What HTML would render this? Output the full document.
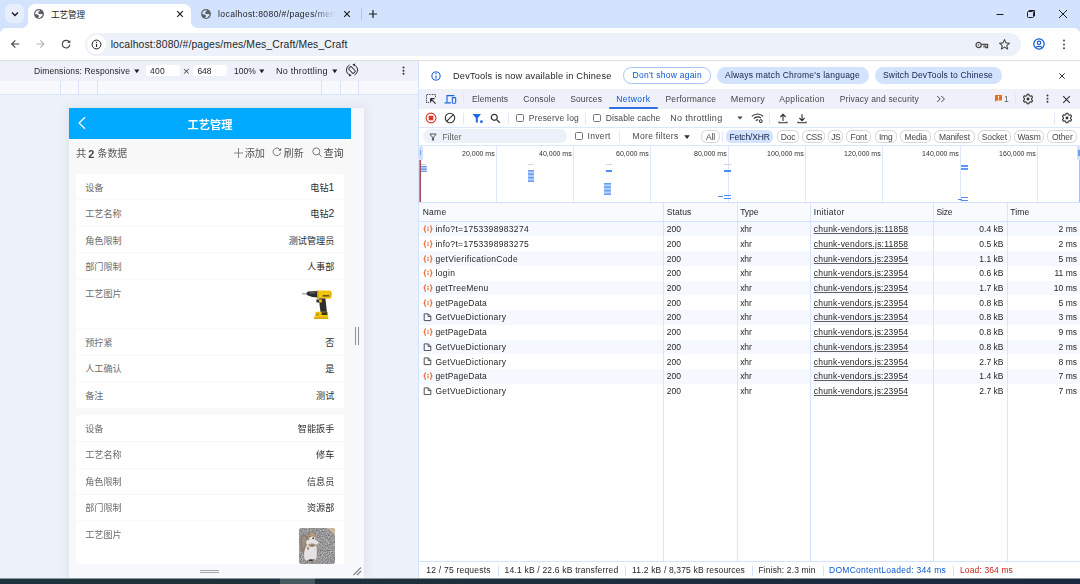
<!DOCTYPE html>
<html lang="zh-CN"><head><meta charset="utf-8"><title>工艺管理</title>
<style>
html,body{margin:0;padding:0}
body{width:1080px;height:584px;overflow:hidden;position:relative;background:#fff;font-family:"Liberation Sans", "Noto Sans CJK SC", sans-serif;}
#root{position:absolute;left:0;top:0;width:1080px;height:584px;overflow:hidden;opacity:0.999}
#root div,#root span,#root svg{position:absolute;display:block}
#root span{white-space:nowrap;line-height:14px;height:14px}
#root span b{position:static;display:inline;font-weight:700}
#root span i{position:static;display:inline;font-style:normal}
</style></head>
<body><div id="root">
<div style="left:0px;top:0px;width:1080px;height:28px;background:#d3e3fd;"></div>
<div style="left:5px;top:4px;width:19px;height:19px;background:#e6eefc;border-radius:6px;"></div>
<svg style="left:10px;top:9px;" width="10" height="10" viewBox="0 0 10 10"><path d="M2 3.5 L5 6.5 L8 3.5" fill="none" stroke="#1f1f1f" stroke-width="1.5"/></svg>
<div style="left:28px;top:4px;width:163px;height:26px;background:#ffffff;border-radius:7px 7px 0 0;"></div>
<svg style="left:22px;top:22px;" width="6" height="6" viewBox="0 0 6 6"><path d="M6 0 A6 6 0 0 1 0 6 L6 6 Z" fill="#fff"/></svg>
<svg style="left:191px;top:22px;" width="6" height="6" viewBox="0 0 6 6"><path d="M0 0 A6 6 0 0 0 6 6 L0 6 Z" fill="#fff"/></svg>
<svg style="left:33.4px;top:7.9px;" width="12" height="12" viewBox="0 0 12 12"><circle cx="6" cy="6" r="4.95" fill="#5a5e63"/><path d="M2.2 5.2 C2.6 4 3.4 3.1 4.4 2.6 L6.9 1.9 C6.6 2.8 6.3 3.4 5.7 3.9 C5.3 4.3 4.9 4.5 5 4.9 C5.4 5.6 6.2 5.9 7 6 L9.7 6.2 C9.7 7 9.4 7.6 8.9 8.1 C8.4 8.7 8 9.1 7.4 9.5 C6.6 10 5.8 10.2 4.8 10.1 C5.2 9.6 5.8 9 5.9 8.4 C6 7.9 5.9 7.5 5.6 7.2 C4.8 6.6 3.4 6.4 2.4 6.2 Z" fill="#fff"/></svg>
<span style="top:7.60px;font-size:8.6px;color:#1f1f1f;left:51.00px;letter-spacing:-0.098px;">工艺管理</span>
<svg style="left:176px;top:10px;" width="8" height="8" viewBox="0 0 8 8"><path d="M1.2 1.2 L6.8 6.8 M6.8 1.2 L1.2 6.8" stroke="#1f1f1f" stroke-width="1.2" fill="none"/></svg>
<svg style="left:200.3px;top:7.9px;" width="12" height="12" viewBox="0 0 12 12"><circle cx="6" cy="6" r="4.95" fill="#5a5e63"/><path d="M2.2 5.2 C2.6 4 3.4 3.1 4.4 2.6 L6.9 1.9 C6.6 2.8 6.3 3.4 5.7 3.9 C5.3 4.3 4.9 4.5 5 4.9 C5.4 5.6 6.2 5.9 7 6 L9.7 6.2 C9.7 7 9.4 7.6 8.9 8.1 C8.4 8.7 8 9.1 7.4 9.5 C6.6 10 5.8 10.2 4.8 10.1 C5.2 9.6 5.8 9 5.9 8.4 C6 7.9 5.9 7.5 5.6 7.2 C4.8 6.6 3.4 6.4 2.4 6.2 Z" fill="#d3e3fd"/></svg>
<span style="top:7.30px;font-size:8.6px;color:#1f1f1f;left:218.00px;letter-spacing:0.385px;-webkit-mask-image:linear-gradient(90deg,#000 80%,transparent 100%);mask-image:linear-gradient(90deg,#000 80%,transparent 100%);">localhost:8080/#/pages/men</span>
<svg style="left:343px;top:10px;" width="8" height="8" viewBox="0 0 8 8"><path d="M1.2 1.2 L6.8 6.8 M6.8 1.2 L1.2 6.8" stroke="#1f1f1f" stroke-width="1.2" fill="none"/></svg>
<div style="left:360.5px;top:8px;width:1px;height:12px;background:#a8c7fa;"></div>
<svg style="left:368px;top:9px;" width="10" height="10" viewBox="0 0 10 10"><path d="M5 1 V9 M1 5 H9" stroke="#1f1f1f" stroke-width="1.2" fill="none"/></svg>
<svg style="left:995px;top:9px;" width="10" height="10" viewBox="0 0 10 10"><path d="M1.5 5.5 H8.5" stroke="#1f1f1f" stroke-width="1" fill="none"/></svg>
<svg style="left:1026px;top:9px;" width="10" height="10" viewBox="0 0 10 10"><rect x="1.5" y="2.5" width="6" height="6" rx="1" fill="none" stroke="#1f1f1f" stroke-width="1"/><path d="M3 2.5 V1.5 H8.5 V7 H7.5" fill="none" stroke="#1f1f1f" stroke-width="1"/></svg>
<svg style="left:1058px;top:9px;" width="10" height="10" viewBox="0 0 10 10"><path d="M1 1 L9 9 M9 1 L1 9" stroke="#1f1f1f" stroke-width="1" fill="none"/></svg>
<div style="left:0px;top:28px;width:1080px;height:32.5px;background:#ffffff;"></div>
<svg style="left:0px;top:28px;" width="6" height="6" viewBox="0 0 6 6"><path d="M0 0 H6 A6 6 0 0 0 0 6 Z" fill="#d3e3fd"/></svg>
<svg style="left:1074px;top:28px;" width="6" height="6" viewBox="0 0 6 6"><path d="M6 0 H0 A6 6 0 0 1 6 6 Z" fill="#d3e3fd"/></svg>
<div style="left:0px;top:60px;width:1080px;height:1px;background:#dcdfe4;"></div>
<svg style="left:9px;top:38px;" width="12" height="12" viewBox="0 0 12 12"><path d="M10.2 6 H2.8 M6.3 2.4 L2.7 6 L6.3 9.6" fill="none" stroke="#474747" stroke-width="1.15"/></svg>
<svg style="left:34px;top:38px;" width="12" height="12" viewBox="0 0 12 12"><path d="M2.4 6 H9.8 M6.3 2.4 L9.9 6 L6.3 9.6" fill="none" stroke="#b4b7bb" stroke-width="1.15"/></svg>
<svg style="left:60px;top:38px;" width="12" height="12" viewBox="0 0 12 12"><path d="M9.5 4.4 A3.8 3.8 0 1 0 9.9 6.6" fill="none" stroke="#474747" stroke-width="1.15"/><path d="M10.3 2 V4.9 H7.4 Z" fill="#474747"/></svg>
<div style="left:85px;top:33px;width:936px;height:23px;background:#edf2fa;border-radius:11.5px;"></div>
<div style="left:87px;top:35px;width:19px;height:19px;background:#ffffff;border-radius:9.5px;"></div>
<svg style="left:91px;top:39px;" width="11" height="11" viewBox="0 0 11 11"><circle cx="5.5" cy="5.5" r="4.4" fill="none" stroke="#1f1f1f" stroke-width="1"/><path d="M5.5 5 V8" stroke="#1f1f1f" stroke-width="1.1"/><circle cx="5.5" cy="3.4" r="0.65" fill="#1f1f1f"/></svg>
<span style="top:38.40px;font-size:10.4px;color:#1f1f1f;left:110.70px;letter-spacing:0.126px;">localhost:8080/#/pages/mes/Mes_Craft/Mes_Craft</span>
<svg style="left:975px;top:40px;" width="14" height="10" viewBox="0 0 14 10"><circle cx="3.6" cy="5" r="2.6" fill="none" stroke="#474747" stroke-width="1.2"/><circle cx="3.4" cy="5" r="0.7" fill="#474747"/><path d="M6.2 4.4 H12.6 V7.6 H10.8 V6 H9 V7.6" fill="none" stroke="#474747" stroke-width="1.2"/></svg>
<svg style="left:998px;top:38px;" width="13" height="13" viewBox="0 0 13 13"><path d="M6.5 1.6 L7.95 4.9 L11.5 5.2 L8.8 7.55 L9.6 11 L6.5 9.15 L3.4 11 L4.2 7.55 L1.5 5.2 L5.05 4.9 Z" fill="none" stroke="#474747" stroke-width="1.1" stroke-linejoin="round"/></svg>
<svg style="left:1033px;top:38px;" width="12" height="12" viewBox="0 0 12 12"><circle cx="6" cy="6" r="5.2" fill="none" stroke="#0b57d0" stroke-width="1.2"/><circle cx="6" cy="4.8" r="1.7" fill="none" stroke="#0b57d0" stroke-width="1.1"/><path d="M2.6 9.6 C3.6 7.9 8.4 7.9 9.4 9.6" fill="none" stroke="#0b57d0" stroke-width="1.1"/></svg>
<svg style="left:1062.3px;top:38.6px;" width="4" height="11" viewBox="0 0 4 11"><circle cx="2" cy="1.6" r="1" fill="#474747"/><circle cx="2" cy="5.4" r="1" fill="#474747"/><circle cx="2" cy="9.2" r="1" fill="#474747"/></svg>
<div style="left:0px;top:61px;width:419px;height:19.5px;background:#eef1f9;"></div>
<span style="top:63.60px;font-size:8.5px;color:#1f1f1f;left:34.00px;letter-spacing:0.112px;">Dimensions: Responsive</span>
<svg style="left:133.8px;top:69.3px;" width="6" height="5" viewBox="0 0 6 5"><path d="M0.3 0.6 H5.3 L2.8 4.2 Z" fill="#1f1f1f"/></svg>
<div style="left:146px;top:65.2px;width:34px;height:10.7px;background:#ffffff;border-radius:3px;"></div>
<span style="top:63.60px;font-size:8.5px;color:#1f1f1f;left:150.00px;letter-spacing:0.271px;">400</span>
<span style="top:63.90px;font-size:11.5px;color:#474747;left:183.00px;">×</span>
<div style="left:192.6px;top:65.2px;width:34.2px;height:10.7px;background:#ffffff;border-radius:3px;"></div>
<span style="top:63.60px;font-size:8.5px;color:#1f1f1f;left:197.40px;letter-spacing:-0.062px;">648</span>
<span style="top:63.60px;font-size:8.5px;color:#1f1f1f;left:234.00px;letter-spacing:-0.013px;">100%</span>
<svg style="left:259.2px;top:69.3px;" width="6" height="5" viewBox="0 0 6 5"><path d="M0.3 0.6 H5.3 L2.8 4.2 Z" fill="#1f1f1f"/></svg>
<span style="top:63.60px;font-size:9.01px;color:#1f1f1f;left:276.00px;letter-spacing:0.239px;">No throttling</span>
<svg style="left:332px;top:69.3px;" width="6" height="5" viewBox="0 0 6 5"><path d="M0.3 0.6 H5.3 L2.8 4.2 Z" fill="#1f1f1f"/></svg>
<svg style="left:345px;top:63.4px;" width="14" height="14" viewBox="0 0 14 14"><g transform="rotate(-45 7 7)" fill="none" stroke="#303030" stroke-width="1"><rect x="5.2" y="3.6" width="3.6" height="6.8" rx="0.9"/></g><path d="M4.63 1.92 A5.6 5.6 0 0 0 4.63 12.08 M9.37 12.08 A5.6 5.6 0 0 0 9.37 1.92" fill="none" stroke="#303030" stroke-width="1"/><path d="M4.2 10.5 L6.7 12.5 L3.9 13.5 Z M9.8 3.5 L7.3 1.5 L10.1 0.5 Z" fill="#303030"/></svg>
<svg style="left:401.5px;top:66px;" width="3" height="10" viewBox="0 0 3 10"><circle cx="1.5" cy="1.5" r="1" fill="#303030"/><circle cx="1.5" cy="4.65" r="1" fill="#303030"/><circle cx="1.5" cy="7.8" r="1" fill="#303030"/></svg>
<div style="left:0px;top:80.5px;width:419px;height:13.5px;background:#f8f9fd;"></div>
<div style="left:59.8px;top:80.5px;width:1px;height:13.5px;background:#d9e4fa;"></div>
<div style="left:77.8px;top:80.5px;width:1px;height:13.5px;background:#d9e4fa;"></div>
<div style="left:96.8px;top:80.5px;width:1px;height:13.5px;background:#d9e4fa;"></div>
<div style="left:321px;top:80.5px;width:1px;height:13.5px;background:#d9e4fa;"></div>
<div style="left:339.7px;top:80.5px;width:1px;height:13.5px;background:#d9e4fa;"></div>
<div style="left:358px;top:80.5px;width:1px;height:13.5px;background:#d9e4fa;"></div>
<div style="left:0px;top:94px;width:419px;height:1px;background:#dbe5fa;"></div>
<div style="left:0px;top:95px;width:419px;height:483px;background:#edf1f9;"></div>
<div style="left:69px;top:108px;width:295px;height:469.5px;background:#f7f8fc;box-shadow:0 0 9px 1px rgba(60,64,80,0.10);"></div>
<div style="left:355px;top:327px;width:1px;height:18px;background:#8f9194;"></div>
<div style="left:358px;top:327px;width:1px;height:18px;background:#8f9194;"></div>
<div style="left:200px;top:569.6px;width:19px;height:1px;background:#a4a6a9;"></div>
<div style="left:200px;top:572px;width:19px;height:1px;background:#a4a6a9;"></div>
<svg style="left:352px;top:566px;" width="10" height="10" viewBox="0 0 10 10"><path d="M1.5 9 L9 1.5 M5 9 L9 5" stroke="#7e8084" stroke-width="1.1" fill="none"/></svg>
<div style="left:69px;top:108px;width:281.5px;height:455.6px;background:#f8f8f8;overflow:hidden" id="vp">
<div style="left:0px;top:0px;width:282px;height:30.8px;background:#00aaff;"></div>
<svg style="left:8px;top:7.5px;" width="10" height="14" viewBox="0 0 10 14"><path d="M8 1.2 L2 7 L8 12.8" fill="none" stroke="#ffffff" stroke-width="1.2"/></svg>
<span style="top:10.00px;font-size:11.2px;color:#ffffff;font-weight:700;left:118.60px;letter-spacing:0.009px;">工艺管理</span>
<span style="top:38.80px;font-size:10.2px;color:#5a5a5a;left:7.10px;">共</span>
<span style="top:38.60px;font-size:10.79px;color:#444444;font-weight:700;left:19.30px;letter-spacing:-0.001px;">2</span>
<span style="top:38.80px;font-size:9.88px;color:#5a5a5a;left:28.60px;letter-spacing:0.000px;">条数据</span>
<svg style="left:165.4px;top:39.5px;" width="9" height="10" viewBox="0 0 9 10"><path d="M4.5 0 V10 M0 5 H9" stroke="#6a6a6a" stroke-width="0.8" fill="none"/></svg>
<span style="top:38.50px;font-size:10.2px;color:#555555;left:175.70px;letter-spacing:-0.037px;">添加</span>
<svg style="left:203.39999999999998px;top:39.400000000000006px;" width="10" height="10" viewBox="0 0 10 10"><path d="M8.3 3.2 A3.8 3.8 0 1 0 8.6 5.6" fill="none" stroke="#666" stroke-width="0.85"/><path d="M9.1 0.9 V3.7 H6.3 Z" fill="#666"/></svg>
<span style="top:38.50px;font-size:9.86px;color:#555555;left:214.80px;letter-spacing:0.000px;">刷新</span>
<svg style="left:242.8px;top:39.30000000000001px;" width="10.5" height="10.5" viewBox="0 0 10.5 10.5"><circle cx="4.3" cy="4.4" r="3.5" fill="none" stroke="#666" stroke-width="0.85"/><path d="M6.9 7 L9.6 9.8" stroke="#666" stroke-width="0.9"/></svg>
<span style="top:38.50px;font-size:9.86px;color:#444444;left:254.80px;letter-spacing:0.000px;">查询</span>
<div style="left:7px;top:66px;width:268px;height:234px;background:#ffffff;border-radius:3px;"></div>
<span style="top:72.90px;font-size:9.15px;color:#6c6c6c;left:16.20px;">设备</span>
<span style="top:72.90px;font-size:9.15px;color:#2c2c2c;right:16.20px;">电钻<i style="font-size:10.3px">1</i></span>
<span style="top:99.30px;font-size:9.15px;color:#6c6c6c;left:16.20px;">工艺名称</span>
<span style="top:99.30px;font-size:9.15px;color:#2c2c2c;right:16.20px;">电钻<i style="font-size:10.3px">2</i></span>
<span style="top:125.80px;font-size:9.15px;color:#6c6c6c;left:16.20px;">角色限制</span>
<span style="top:125.80px;font-size:9.15px;color:#2c2c2c;right:16.20px;">测试管理员</span>
<span style="top:152.30px;font-size:9.15px;color:#6c6c6c;left:16.20px;">部门限制</span>
<span style="top:152.30px;font-size:9.15px;color:#2c2c2c;right:16.20px;">人事部</span>
<span style="top:178.60px;font-size:9.15px;color:#6c6c6c;left:16.20px;">工艺图片</span>
<span style="top:228.10px;font-size:9.15px;color:#6c6c6c;left:16.20px;">预拧紧</span>
<span style="top:228.10px;font-size:9.15px;color:#2c2c2c;right:16.20px;">否</span>
<span style="top:254.40px;font-size:9.15px;color:#6c6c6c;left:16.20px;">人工确认</span>
<span style="top:254.40px;font-size:9.15px;color:#2c2c2c;right:16.20px;">是</span>
<span style="top:280.80px;font-size:9.15px;color:#6c6c6c;left:16.20px;">备注</span>
<span style="top:280.80px;font-size:9.15px;color:#2c2c2c;right:16.20px;">测试</span>
<div style="left:7px;top:91.4px;width:268px;height:1px;background:#f8f8f8;"></div>
<div style="left:7px;top:117.9px;width:268px;height:1px;background:#f8f8f8;"></div>
<div style="left:7px;top:144.4px;width:268px;height:1px;background:#f8f8f8;"></div>
<div style="left:7px;top:170.8px;width:268px;height:1px;background:#f8f8f8;"></div>
<div style="left:7px;top:220.39999999999998px;width:268px;height:1px;background:#f8f8f8;"></div>
<div style="left:7px;top:246.8px;width:268px;height:1px;background:#f8f8f8;"></div>
<div style="left:7px;top:273.2px;width:268px;height:1px;background:#f8f8f8;"></div>
<svg style="left:233px;top:181.5px;" width="30" height="29" viewBox="0 0 30 29"><defs><filter id="dbl" x="-10%" y="-10%" width="120%" height="120%"><feGaussianBlur stdDeviation="0.28"/></filter></defs><g filter="url(#dbl)"><rect x="0" y="3.4" width="5.4" height="0.9" fill="#7d7d7d"/><path d="M4.6 3 L6 1.5 L15.4 0.9 L15.6 7.4 L10.4 7 L6 5.6 L4.6 4.6 Z" fill="#2c2c2a"/><path d="M7 2.4 L13.6 1.8 L13.8 3.4 L7.4 4 Z" fill="#55554f"/><rect x="15.1" y="0.5" width="14.4" height="8.3" rx="1.8" fill="#f1c40f"/><rect x="15.1" y="0.5" width="1.3" height="8.3" fill="#c99a06"/><rect x="20.6" y="5.2" width="6.6" height="1.3" fill="#4a4024"/><rect x="27.6" y="2" width="1.6" height="5" rx="0.6" fill="#dcae08"/><path d="M16.8 8.6 H23.4 L25 22.6 H18.6 Z" fill="#2d2d2d"/><path d="M14.2 9.4 H17 L17.4 12.6 H14.6 Z" fill="#33332f"/><path d="M16.9 9.4 H19.8 L19.8 12.6 H17.4 Z" fill="#f1c40f"/><path d="M13.8 21.8 H26 L26.2 29 H12 Z" fill="#f1c40f"/><path d="M12 27.6 H26.2 V29 H12 Z" fill="#d9a806"/><rect x="19.6" y="22.2" width="5.6" height="2.8" fill="#3c3624"/><rect x="14.2" y="23.2" width="2.6" height="2.6" rx="0.6" fill="#c99a06"/></g></svg>
<div style="left:7px;top:307px;width:268px;height:170px;background:#ffffff;border-radius:3px;"></div>
<span style="top:313.70px;font-size:9.15px;color:#6c6c6c;left:16.20px;">设备</span>
<span style="top:313.70px;font-size:9.15px;color:#2c2c2c;right:16.20px;">智能扳手</span>
<span style="top:340.30px;font-size:9.15px;color:#6c6c6c;left:16.20px;">工艺名称</span>
<span style="top:340.30px;font-size:9.15px;color:#2c2c2c;right:16.20px;">修车</span>
<span style="top:366.70px;font-size:9.15px;color:#6c6c6c;left:16.20px;">角色限制</span>
<span style="top:366.70px;font-size:9.15px;color:#2c2c2c;right:16.20px;">信息员</span>
<span style="top:393.10px;font-size:9.15px;color:#6c6c6c;left:16.20px;">部门限制</span>
<span style="top:393.10px;font-size:9.15px;color:#2c2c2c;right:16.20px;">资源部</span>
<span style="top:419.60px;font-size:9.15px;color:#6c6c6c;left:16.20px;">工艺图片</span>
<div style="left:7px;top:333px;width:268px;height:1px;background:#f8f8f8;"></div>
<div style="left:7px;top:359.5px;width:268px;height:1px;background:#f8f8f8;"></div>
<div style="left:7px;top:386px;width:268px;height:1px;background:#f8f8f8;"></div>
<div style="left:7px;top:412.4px;width:268px;height:1px;background:#f8f8f8;"></div>
<svg style="left:230px;top:419.70000000000005px;" width="36" height="36" viewBox="0 0 36 36"><defs><clipPath id="sqc"><rect x="0" y="0" width="36" height="36" rx="3"/></clipPath><filter id="grv" x="0" y="0" width="100%" height="100%" color-interpolation-filters="sRGB"><feTurbulence type="fractalNoise" baseFrequency="0.85" numOctaves="2" seed="7"/><feColorMatrix type="matrix" values="0.55 0 0 0 0.32  0.55 0 0 0 0.32  0.55 0 0 0 0.325  0 0 0 0 1"/></filter><filter id="sbl" x="-10%" y="-10%" width="120%" height="120%"><feGaussianBlur stdDeviation="0.45"/></filter></defs><g clip-path="url(#sqc)"><rect width="36" height="36" fill="#999"/><rect width="36" height="36" filter="url(#grv)"/><path d="M27 0 L36 0 L36 7 C33 4.4 31 1.8 27 0 Z" fill="#cdbb9f" filter="url(#sbl)"/><g filter="url(#sbl)" transform="translate(0.6 1.6)"><path d="M1 8 C1.5 3.6 6.5 3.4 8 7 C9 11 7.4 17 6 21 C5 24 3.4 24.4 2 22 C0.6 18 0.6 12 1 8 Z" fill="#8c7f70"/><path d="M2.6 8 C3.6 6 6 6.4 6.4 9 C6.4 13 5 18 3.8 20 C2.4 17 2.2 11 2.6 8 Z" fill="#a19182"/><path d="M8.4 5.4 L8.8 1.6 L10.6 4.4 Z" fill="#9a7856"/><path d="M15.8 4.6 L15.4 1.6 L14 3.8 Z" fill="#9a7856"/><ellipse cx="12.4" cy="7.2" rx="3.6" ry="3.4" fill="#b89a78"/><ellipse cx="12.6" cy="9" rx="2.8" ry="2.2" fill="#efe9e2"/><ellipse cx="13.6" cy="8.6" rx="0.8" ry="1" fill="#2e2620"/><circle cx="10.4" cy="6.6" r="0.5" fill="#2a221c"/><path d="M7 11 C9 9.4 16.6 9.4 18.8 12.4 C19.4 14 18 15 16.4 14.6 C17.4 19 17.6 26 16.4 30 C15 31.4 8 31.6 5.4 30 C3.6 26 4.6 19 7.4 15.4 C6.4 14 6.2 12 7 11 Z" fill="#e4e2e2"/><path d="M8.4 14.8 C10.6 13.8 14.6 13.8 16.4 14.6 L15.6 16.6 C13.6 17.4 10.6 17.2 9 16.6 Z" fill="#b09a82"/><ellipse cx="12.6" cy="15.8" rx="1.6" ry="1" fill="#86705a"/><path d="M7.6 17.6 C8.6 17 9.6 17.6 9.6 19 C9.4 20.4 8 20.6 7.4 19.6 Z" fill="#b08a64"/><ellipse cx="11.2" cy="30.6" rx="2.4" ry="0.9" fill="#3a332e"/><ellipse cx="7.8" cy="32.2" rx="1.4" ry="0.9" fill="#9c7450"/><ellipse cx="14.2" cy="30.2" rx="1.3" ry="0.8" fill="#9c7450"/></g></g></svg>
</div>
<div style="left:418px;top:61px;width:1px;height:517px;background:#d3e3fd;"></div>
<div style="left:419px;top:61px;width:661px;height:517px;background:#ffffff;"></div>
<svg style="left:429.8px;top:69.6px;" width="12" height="12" viewBox="0 0 12 12"><circle cx="6" cy="6" r="4.1" fill="none" stroke="#0b57d0" stroke-width="1"/><path d="M6 5.4 V8.6" stroke="#0b57d0" stroke-width="1.1"/><circle cx="6" cy="3.7" r="0.65" fill="#0b57d0"/></svg>
<span style="top:69.00px;font-size:9.2px;color:#1f1f1f;left:453.00px;letter-spacing:0.204px;">DevTools is now available in Chinese</span>
<div style="left:622.5px;top:67.2px;width:88.5px;height:16.5px;background:#ffffff;border-radius:8.25px;box-sizing:border-box;border:1px solid #a8c7fa;"></div>
<span style="top:68.30px;font-size:8.5px;color:#0b57d0;left:632.50px;letter-spacing:0.284px;">Don't show again</span>
<div style="left:716.5px;top:67.2px;width:152.5px;height:16.5px;background:#d3e3fd;border-radius:8.25px;"></div>
<span style="top:68.30px;font-size:8.5px;color:#10234b;left:725.00px;letter-spacing:0.225px;">Always match Chrome's language</span>
<div style="left:874.7px;top:67.2px;width:127.3px;height:16.5px;background:#d3e3fd;border-radius:8.25px;"></div>
<span style="top:68.30px;font-size:8.5px;color:#10234b;left:883.00px;letter-spacing:0.178px;">Switch DevTools to Chinese</span>
<svg style="left:1058px;top:71.5px;" width="8" height="8" viewBox="0 0 8 8"><path d="M1.3 1.3 L6.7 6.7 M6.7 1.3 L1.3 6.7" stroke="#303030" stroke-width="1" fill="none"/></svg>
<div style="left:419px;top:89px;width:661px;height:19.7px;background:#eef1f9;"></div>
<svg style="left:425px;top:93px;" width="12" height="12" viewBox="0 0 12 12"><path d="M1.5 9.5 V1.5 H10.5 V5" fill="none" stroke="#303030" stroke-width="1" stroke-dasharray="0.9 0.8"/><path d="M1.5 9.5 H4.5" fill="none" stroke="#303030" stroke-width="1" stroke-dasharray="0.9 0.8"/><path d="M5.6 5.6 L10.6 10.6 M5.6 5.6 V9.6 M5.6 5.6 H9.6" fill="none" stroke="#303030" stroke-width="1.2"/></svg>
<svg style="left:444px;top:93px;" width="13" height="12" viewBox="0 0 13 12"><path d="M3 9 V2.6 H10.4" fill="none" stroke="#1a66e0" stroke-width="1.15"/><path d="M0.6 9.9 H6.8" stroke="#1a66e0" stroke-width="1.3"/><rect x="8.3" y="4.6" width="3.4" height="5.6" rx="0.6" fill="none" stroke="#1a66e0" stroke-width="1.1"/></svg>
<div style="left:463px;top:93px;width:1px;height:11px;background:#e0e8f9;"></div>
<span style="top:92.00px;font-size:8.5px;color:#474747;left:472.00px;letter-spacing:0.070px;">Elements</span>
<span style="top:92.00px;font-size:8.5px;color:#474747;left:523.30px;letter-spacing:0.145px;">Console</span>
<span style="top:92.00px;font-size:8.5px;color:#474747;left:570.30px;letter-spacing:0.073px;">Sources</span>
<span style="top:92.00px;font-size:8.5px;color:#0b57d0;left:616.30px;letter-spacing:0.402px;">Network</span>
<div style="left:609px;top:106.6px;width:49px;height:2px;background:#2f6fe0;border-radius:1px;"></div>
<span style="top:92.00px;font-size:8.5px;color:#474747;left:665.50px;letter-spacing:0.193px;">Performance</span>
<span style="top:92.00px;font-size:9.01px;color:#474747;left:730.80px;letter-spacing:0.276px;">Memory</span>
<span style="top:92.00px;font-size:8.5px;color:#474747;left:779.20px;letter-spacing:0.382px;">Application</span>
<span style="top:92.00px;font-size:8.5px;color:#474747;left:839.70px;letter-spacing:0.162px;">Privacy and security</span>
<svg style="left:936px;top:95px;" width="10" height="8" viewBox="0 0 10 8"><path d="M1.2 1 L4.2 4 L1.2 7 M5.4 1 L8.4 4 L5.4 7" fill="none" stroke="#474747" stroke-width="1"/></svg>
<svg style="left:995px;top:95px;" width="7" height="7" viewBox="0 0 7 7"><path d="M0.3 0 H6.7 Q7 0 7 0.3 V5.2 Q7 5.5 6.7 5.5 H1.6 L0 7 V0.3 Q0 0 0.3 0 Z" fill="#ee6b1a"/><rect x="3" y="1" width="1" height="2.4" fill="#fff"/><rect x="3" y="3.9" width="1" height="0.9" fill="#fff"/></svg>
<span style="top:91.50px;font-size:8.5px;color:#5a5a5a;left:1003.90px;">1</span>
<div style="left:1014.6px;top:93px;width:1px;height:11px;background:#e0e8f9;"></div>
<svg style="left:1021.8px;top:92.8px;" width="12" height="12" viewBox="0 0 12 12"><g fill="none" stroke="#303030" stroke-width="1.05"><circle cx="6" cy="6" r="1.45" fill="#303030" stroke="none"/><path d="M5.1 1.2 H6.9 L7.2 2.6 L8.3 3.2 L9.7 2.8 L10.6 4.4 L9.6 5.4 V6.6 L10.6 7.6 L9.7 9.2 L8.3 8.8 L7.2 9.4 L6.9 10.8 H5.1 L4.8 9.4 L3.7 8.8 L2.3 9.2 L1.4 7.6 L2.4 6.6 V5.4 L1.4 4.4 L2.3 2.8 L3.7 3.2 L4.8 2.6 Z" stroke-linejoin="round"/></g></svg>
<svg style="left:1045.9px;top:94px;" width="3" height="10" viewBox="0 0 3 10"><circle cx="1.5" cy="1.5" r="0.95" fill="#303030"/><circle cx="1.5" cy="4.65" r="0.95" fill="#303030"/><circle cx="1.5" cy="7.8" r="0.95" fill="#303030"/></svg>
<svg style="left:1062.2px;top:94.5px;" width="9" height="9" viewBox="0 0 9 9"><path d="M1.2 1.2 L7.8 7.8 M7.8 1.2 L1.2 7.8" stroke="#303030" stroke-width="1.1" fill="none"/></svg>
<div style="left:419px;top:127.3px;width:661px;height:1px;background:#dbe6fc;"></div>
<svg style="left:424.5px;top:111.8px;" width="12" height="12" viewBox="0 0 12 12"><circle cx="6" cy="6" r="4.9" fill="none" stroke="#dc362e" stroke-width="1.1"/><rect x="3.7" y="3.7" width="4.6" height="4.6" rx="0.6" fill="#dc362e"/></svg>
<svg style="left:444.3px;top:111.8px;" width="12" height="12" viewBox="0 0 12 12"><circle cx="6" cy="6" r="4.7" fill="none" stroke="#303030" stroke-width="1.1"/><path d="M2.7 9.3 L9.3 2.7" stroke="#303030" stroke-width="1.1"/></svg>
<div style="left:463px;top:112.5px;width:1px;height:11px;background:#e0e8f9;"></div>
<svg style="left:471.5px;top:112.5px;" width="12" height="11" viewBox="0 0 12 11"><path d="M0.6 1 H9 L5.8 5 V9.4 H3.8 V5 Z" fill="#1a68e8"/><circle cx="9.4" cy="8.7" r="1.35" fill="#1a68e8"/></svg>
<svg style="left:490.2px;top:112.8px;" width="11" height="11" viewBox="0 0 11 11"><circle cx="4.3" cy="4.3" r="3" fill="none" stroke="#303030" stroke-width="1.2"/><path d="M6.6 6.6 L9.8 9.8" stroke="#303030" stroke-width="1.3"/></svg>
<div style="left:508.3px;top:112.5px;width:1px;height:11px;background:#e0e8f9;"></div>
<div style="left:516.0999999999999px;top:113.6px;width:8.4px;height:8.4px;background:#ffffff;border-radius:1.6px;box-sizing:border-box;border:1px solid #747775;"></div>
<span style="top:110.80px;font-size:8.5px;color:#474747;left:528.80px;letter-spacing:0.207px;">Preserve log</span>
<div style="left:585px;top:112.5px;width:1px;height:11px;background:#e0e8f9;"></div>
<div style="left:592.8px;top:113.6px;width:8.4px;height:8.4px;background:#ffffff;border-radius:1.6px;box-sizing:border-box;border:1px solid #747775;"></div>
<span style="top:110.80px;font-size:8.5px;color:#474747;left:605.80px;letter-spacing:0.085px;">Disable cache</span>
<span style="top:110.80px;font-size:9.01px;color:#474747;left:670.30px;letter-spacing:0.277px;">No throttling</span>
<svg style="left:736.7px;top:116px;" width="6" height="4" viewBox="0 0 6 4"><path d="M0.4 0.4 H5.6 L3 3.4 Z" fill="#474747"/></svg>
<svg style="left:750.5px;top:112px;" width="13" height="12" viewBox="0 0 13 12"><g fill="none" stroke="#303030" stroke-width="1.1"><path d="M0.8 4.4 C3.8 1.2 9.2 1.2 12.2 4.4"/><path d="M2.8 6.6 C4.8 4.4 8.2 4.4 10 6.2"/><path d="M4.8 8.6 C5.6 7.8 6.6 7.7 7.3 8.1"/></g><circle cx="9.8" cy="9.2" r="1.5" fill="none" stroke="#303030" stroke-width="1"/><circle cx="9.8" cy="9.2" r="0.4" fill="#303030"/></svg>
<div style="left:769px;top:112.5px;width:1px;height:11px;background:#e0e8f9;"></div>
<svg style="left:777.5px;top:112.5px;" width="10" height="11" viewBox="0 0 10 11"><path d="M5 8 V1.6 M2.4 4 L5 1.4 L7.6 4" fill="none" stroke="#303030" stroke-width="1.1"/><path d="M1 8.4 V9.8 H9 V8.4" fill="none" stroke="#303030" stroke-width="1.05"/></svg>
<svg style="left:797.2px;top:112.5px;" width="10" height="11" viewBox="0 0 10 11"><path d="M5 1.2 V7.4 M2.4 5 L5 7.6 L7.6 5" fill="none" stroke="#303030" stroke-width="1.1"/><path d="M1 8.4 V9.8 H9 V8.4" fill="none" stroke="#303030" stroke-width="1.05"/></svg>
<div style="left:1054.2px;top:112.5px;width:1px;height:11px;background:#e0e8f9;"></div>
<svg style="left:1060.7px;top:111.8px;" width="12" height="12" viewBox="0 0 12 12"><g fill="none" stroke="#303030" stroke-width="1.05"><circle cx="6" cy="6" r="1.45" fill="#303030" stroke="none"/><path d="M5.1 1.2 H6.9 L7.2 2.6 L8.3 3.2 L9.7 2.8 L10.6 4.4 L9.6 5.4 V6.6 L10.6 7.6 L9.7 9.2 L8.3 8.8 L7.2 9.4 L6.9 10.8 H5.1 L4.8 9.4 L3.7 8.8 L2.3 9.2 L1.4 7.6 L2.4 6.6 V5.4 L1.4 4.4 L2.3 2.8 L3.7 3.2 L4.8 2.6 Z" stroke-linejoin="round"/></g></svg>
<div style="left:419px;top:145.3px;width:661px;height:1px;background:#dbe6fc;"></div>
<div style="left:422.5px;top:129.4px;width:144.2px;height:13.8px;background:#edf2fa;border-radius:6.9px;"></div>
<svg style="left:429.3px;top:132.6px;" width="8" height="8" viewBox="0 0 8 8"><path d="M0.9 1 H7.1 L4.6 4.2 V7.2 H3.4 V4.2 Z" fill="none" stroke="#303030" stroke-width="0.8" stroke-linejoin="round"/></svg>
<span style="top:129.70px;font-size:8.5px;color:#5e5e5e;left:442.50px;letter-spacing:0.018px;">Filter</span>
<div style="left:575.0px;top:132.10000000000002px;width:8.4px;height:8.4px;background:#ffffff;border-radius:1.6px;box-sizing:border-box;border:1px solid #747775;"></div>
<span style="top:129.30px;font-size:8.5px;color:#474747;left:587.50px;letter-spacing:0.339px;">Invert</span>
<div style="left:619.2px;top:131px;width:1px;height:11px;background:#e0e8f9;"></div>
<span style="top:129.30px;font-size:8.5px;color:#474747;left:632.50px;letter-spacing:0.329px;">More filters</span>
<svg style="left:683.5px;top:135.3px;" width="6" height="4.4" viewBox="0 0 6 4.4"><path d="M0.2 0.3 H5.8 L3 4.1 Z" fill="#303030"/></svg>
<div style="left:701.0999999999999px;top:130px;width:18.80000000000009px;height:13.3px;background:#ffffff;border-radius:5.5px;box-sizing:border-box;border:1px solid #d3d6d9;"></div>
<span style="top:129.50px;font-size:8.5px;color:#474747;left:701.38px;width:18.4px;text-align:center;letter-spacing:-0.15px;">All</span>
<div style="left:722.3px;top:131px;width:1px;height:11px;background:#e0e8f9;"></div>
<div style="left:725.8px;top:130px;width:47.5px;height:13.3px;background:#d3e3fd;border-radius:5.5px;"></div>
<span style="top:129.50px;font-size:8.5px;color:#10234b;left:725.88px;width:47.5px;text-align:center;letter-spacing:-0.15px;">Fetch/XHR</span>
<div style="left:776.5px;top:130px;width:22.9px;height:13.3px;background:#ffffff;border-radius:5.5px;box-sizing:border-box;border:1px solid #d3d6d9;"></div>
<span style="top:129.50px;font-size:8.5px;color:#474747;left:776.78px;width:22.5px;text-align:center;letter-spacing:-0.15px;">Doc</span>
<div style="left:802.3px;top:130px;width:22.600000000000044px;height:13.3px;background:#ffffff;border-radius:5.5px;box-sizing:border-box;border:1px solid #d3d6d9;"></div>
<span style="top:129.50px;font-size:8.5px;color:#474747;left:802.77px;width:22.2px;text-align:center;letter-spacing:-0.55px;">CSS</span>
<div style="left:827.8px;top:130px;width:15.199999999999955px;height:13.3px;background:#ffffff;border-radius:5.5px;box-sizing:border-box;border:1px solid #d3d6d9;"></div>
<span style="top:129.50px;font-size:8.5px;color:#474747;left:828.27px;width:14.8px;text-align:center;letter-spacing:-0.55px;">JS</span>
<div style="left:846.0999999999999px;top:130px;width:25.00000000000002px;height:13.3px;background:#ffffff;border-radius:5.5px;box-sizing:border-box;border:1px solid #d3d6d9;"></div>
<span style="top:129.50px;font-size:8.5px;color:#474747;left:846.38px;width:24.6px;text-align:center;letter-spacing:-0.15px;">Font</span>
<div style="left:874.5px;top:130px;width:22.4px;height:13.3px;background:#ffffff;border-radius:5.5px;box-sizing:border-box;border:1px solid #d3d6d9;"></div>
<span style="top:129.50px;font-size:8.5px;color:#474747;left:874.78px;width:22.0px;text-align:center;letter-spacing:-0.15px;">Img</span>
<div style="left:899.8px;top:130px;width:31.699999999999953px;height:13.3px;background:#ffffff;border-radius:5.5px;box-sizing:border-box;border:1px solid #d3d6d9;"></div>
<span style="top:129.50px;font-size:8.5px;color:#474747;left:900.08px;width:31.3px;text-align:center;letter-spacing:-0.15px;">Media</span>
<div style="left:934.0999999999999px;top:130px;width:40.600000000000044px;height:13.3px;background:#ffffff;border-radius:5.5px;box-sizing:border-box;border:1px solid #d3d6d9;"></div>
<span style="top:129.50px;font-size:8.5px;color:#474747;left:934.38px;width:40.2px;text-align:center;letter-spacing:-0.15px;">Manifest</span>
<div style="left:977.8px;top:130px;width:32.9px;height:13.3px;background:#ffffff;border-radius:5.5px;box-sizing:border-box;border:1px solid #d3d6d9;"></div>
<span style="top:129.50px;font-size:8.5px;color:#474747;left:978.08px;width:32.5px;text-align:center;letter-spacing:-0.15px;">Socket</span>
<div style="left:1013.5px;top:130px;width:30.9px;height:13.3px;background:#ffffff;border-radius:5.5px;box-sizing:border-box;border:1px solid #d3d6d9;"></div>
<span style="top:129.50px;font-size:8.5px;color:#474747;left:1013.78px;width:30.5px;text-align:center;letter-spacing:-0.15px;">Wasm</span>
<div style="left:1047.3px;top:130px;width:29.9px;height:13.3px;background:#ffffff;border-radius:5.5px;box-sizing:border-box;border:1px solid #d3d6d9;"></div>
<span style="top:129.50px;font-size:8.5px;color:#474747;left:1047.58px;width:29.5px;text-align:center;letter-spacing:-0.15px;">Other</span>
<div style="left:496px;top:146.3px;width:1px;height:55.69999999999999px;background:#dde7fb;"></div>
<span style="top:146.70px;font-size:7.0px;color:#303030;right:585.30px;">20,000 ms</span>
<div style="left:573px;top:146.3px;width:1px;height:55.69999999999999px;background:#dde7fb;"></div>
<span style="top:146.70px;font-size:7.0px;color:#303030;right:508.30px;">40,000 ms</span>
<div style="left:650px;top:146.3px;width:1px;height:55.69999999999999px;background:#dde7fb;"></div>
<span style="top:146.70px;font-size:7.0px;color:#303030;right:431.30px;">60,000 ms</span>
<div style="left:728px;top:146.3px;width:1px;height:55.69999999999999px;background:#dde7fb;"></div>
<span style="top:146.70px;font-size:7.0px;color:#303030;right:353.30px;">80,000 ms</span>
<div style="left:805px;top:146.3px;width:1px;height:55.69999999999999px;background:#dde7fb;"></div>
<span style="top:146.70px;font-size:7.0px;color:#303030;right:276.30px;">100,000 ms</span>
<div style="left:882px;top:146.3px;width:1px;height:55.69999999999999px;background:#dde7fb;"></div>
<span style="top:146.70px;font-size:7.0px;color:#303030;right:199.30px;">120,000 ms</span>
<div style="left:960px;top:146.3px;width:1px;height:55.69999999999999px;background:#dde7fb;"></div>
<span style="top:146.70px;font-size:7.0px;color:#303030;right:121.30px;">140,000 ms</span>
<div style="left:1037px;top:146.3px;width:1px;height:55.69999999999999px;background:#dde7fb;"></div>
<span style="top:146.70px;font-size:7.0px;color:#303030;right:44.30px;">160,000 ms</span>
<div style="left:419px;top:202px;width:661px;height:1px;background:#d3e3fd;"></div>
<div style="left:419px;top:146.3px;width:3.6px;height:13.6px;background:#d0e0fc;border-radius:1.8px;"></div>
<div style="left:419.8px;top:150px;width:1.2px;height:5.2px;background:#7fa9f3;"></div>
<div style="left:1076.6px;top:146.3px;width:3.6px;height:13.6px;background:#d0e0fc;border-radius:1.8px;"></div>
<div style="left:1078px;top:149.5px;width:1.6px;height:6px;background:#6d9cf2;"></div>
<div style="left:1079px;top:160px;width:1px;height:42px;background:#a3bdf6;"></div>
<div style="left:419.4px;top:160px;width:1px;height:42px;background:#8f9be6;"></div>
<div style="left:420.3px;top:160px;width:1px;height:42px;background:#ad4656;"></div>
<div style="left:421px;top:164.2px;width:5px;height:0.8px;background:#c9cdd2;"></div>
<svg style="left:421px;top:165.6px;" width="5.8" height="6.9" viewBox="0 0 5.8 6.9"><rect x="0" y="0.00" width="5.8" height="1.10" fill="#5b93f3"/><rect x="0" y="1.60" width="5.8" height="1.10" fill="#5b93f3"/><rect x="0" y="3.20" width="5.8" height="1.10" fill="#5b93f3"/><rect x="0" y="4.80" width="5.8" height="1.10" fill="#5b93f3"/></svg>
<div style="left:527.6px;top:163.8px;width:6.6px;height:0.8px;background:#d5d8dc;"></div>
<svg style="left:527.6px;top:170px;" width="6.6" height="13.1" viewBox="0 0 6.6 13.1"><rect x="0" y="0.00" width="6.6" height="0.85" fill="#4d8bf5"/><rect x="0" y="1.40" width="6.6" height="0.85" fill="#4d8bf5"/><rect x="0" y="2.80" width="6.6" height="0.85" fill="#4d8bf5"/><rect x="0" y="4.20" width="6.6" height="0.85" fill="#4d8bf5"/><rect x="0" y="5.60" width="6.6" height="0.85" fill="#4d8bf5"/><rect x="0" y="7.00" width="6.6" height="0.85" fill="#4d8bf5"/><rect x="0" y="8.40" width="6.6" height="0.85" fill="#4d8bf5"/><rect x="0" y="9.80" width="6.6" height="0.85" fill="#4d8bf5"/><rect x="0" y="11.20" width="6.6" height="0.85" fill="#4d8bf5"/></svg>
<div style="left:605.8px;top:163.8px;width:6.6px;height:0.8px;background:#d5d8dc;"></div>
<div style="left:605.8px;top:170.3px;width:6.6px;height:1.3px;background:#4d8bf5;"></div>
<svg style="left:604.2px;top:182.5px;" width="7.2" height="13.1" viewBox="0 0 7.2 13.1"><rect x="0" y="0.00" width="7.2" height="0.85" fill="#4d8bf5"/><rect x="0" y="1.40" width="7.2" height="0.85" fill="#4d8bf5"/><rect x="0" y="2.80" width="7.2" height="0.85" fill="#4d8bf5"/><rect x="0" y="4.20" width="7.2" height="0.85" fill="#4d8bf5"/><rect x="0" y="5.60" width="7.2" height="0.85" fill="#4d8bf5"/><rect x="0" y="7.00" width="7.2" height="0.85" fill="#4d8bf5"/><rect x="0" y="8.40" width="7.2" height="0.85" fill="#4d8bf5"/><rect x="0" y="9.80" width="7.2" height="0.85" fill="#4d8bf5"/><rect x="0" y="11.20" width="7.2" height="0.85" fill="#4d8bf5"/></svg>
<div style="left:723.5px;top:163.8px;width:7px;height:0.8px;background:#d5d8dc;"></div>
<div style="left:723.5px;top:170.3px;width:7px;height:1.3px;background:#4d8bf5;"></div>
<div style="left:718px;top:195.5px;width:5px;height:1px;background:#4d8bf5;"></div>
<div style="left:723.5px;top:195.2px;width:7px;height:0.9px;background:#4d8bf5;"></div>
<div style="left:723.5px;top:197.6px;width:7px;height:0.9px;background:#4d8bf5;"></div>
<div style="left:961px;top:165.3px;width:7.2px;height:1.5px;background:#5f97f6;"></div>
<div style="left:961px;top:168.3px;width:7.2px;height:1.5px;background:#5f97f6;"></div>
<div style="left:957.5px;top:198.5px;width:4px;height:1px;background:#4d8bf5;"></div>
<div style="left:961px;top:197.2px;width:7.2px;height:1px;background:#4d8bf5;"></div>
<div style="left:961px;top:199.6px;width:7.2px;height:1px;background:#4d8bf5;"></div>
<div style="left:419px;top:203px;width:661px;height:18.3px;background:#f8fafe;"></div>
<div style="left:419px;top:221px;width:661px;height:1px;background:#d3e3fd;"></div>
<span style="top:204.80px;font-size:8.5px;color:#1f1f1f;left:422.70px;letter-spacing:0.278px;">Name</span>
<span style="top:204.80px;font-size:8.5px;color:#1f1f1f;left:666.70px;letter-spacing:0.082px;">Status</span>
<span style="top:204.80px;font-size:8.5px;color:#1f1f1f;left:740.20px;letter-spacing:-0.059px;">Type</span>
<span style="top:204.80px;font-size:8.5px;color:#1f1f1f;left:813.80px;letter-spacing:0.347px;">Initiator</span>
<span style="top:204.80px;font-size:8.5px;color:#1f1f1f;left:936.60px;letter-spacing:-0.212px;">Size</span>
<span style="top:204.80px;font-size:8.5px;color:#1f1f1f;left:1010.30px;letter-spacing:0.080px;">Time</span>
<div style="left:419px;top:221.73999999999998px;width:661px;height:14.72px;background:#f5f8fe;"></div>
<svg style="left:422.6px;top:225.1px;" width="10" height="8" viewBox="0 0 10 8"><path d="M3 0.8 C1.8 0.8 1.9 1.8 1.9 2.6 C1.9 3.4 1.4 3.9 0.6 4 C1.4 4.1 1.9 4.6 1.9 5.4 C1.9 6.2 1.8 7.2 3 7.2 M7 0.8 C8.2 0.8 8.1 1.8 8.1 2.6 C8.1 3.4 8.6 3.9 9.4 4 C8.6 4.1 8.1 4.6 8.1 5.4 C8.1 6.2 8.2 7.2 7 7.2" fill="none" stroke="#e9642c" stroke-width="1.1"/><circle cx="5" cy="2.5" r="0.7" fill="#e9642c"/><rect x="4.45" y="3.7" width="1.1" height="2.4" fill="#e9642c"/></svg>
<span style="top:222.10px;font-size:8.5px;color:#1f1f1f;left:435.40px;letter-spacing:0.319px;">info?t=1753398983274</span>
<span style="top:222.10px;font-size:8.5px;color:#1f1f1f;left:666.70px;letter-spacing:0.037px;">200</span>
<span style="top:222.10px;font-size:8.5px;color:#1f1f1f;left:740.20px;letter-spacing:-0.071px;">xhr</span>
<span style="top:222.10px;font-size:8.5px;color:#1f1f1f;left:813.80px;letter-spacing:0.222px;text-decoration:underline;text-decoration-color:#606060;text-decoration-thickness:0.8px;">chunk-vendors.js:11858</span>
<span style="top:222.10px;font-size:8.5px;color:#1f1f1f;right:76.60px;">0.4 kB</span>
<span style="top:222.10px;font-size:8.5px;color:#1f1f1f;right:3.00px;">2 ms</span>
<svg style="left:422.6px;top:239.82px;" width="10" height="8" viewBox="0 0 10 8"><path d="M3 0.8 C1.8 0.8 1.9 1.8 1.9 2.6 C1.9 3.4 1.4 3.9 0.6 4 C1.4 4.1 1.9 4.6 1.9 5.4 C1.9 6.2 1.8 7.2 3 7.2 M7 0.8 C8.2 0.8 8.1 1.8 8.1 2.6 C8.1 3.4 8.6 3.9 9.4 4 C8.6 4.1 8.1 4.6 8.1 5.4 C8.1 6.2 8.2 7.2 7 7.2" fill="none" stroke="#e9642c" stroke-width="1.1"/><circle cx="5" cy="2.5" r="0.7" fill="#e9642c"/><rect x="4.45" y="3.7" width="1.1" height="2.4" fill="#e9642c"/></svg>
<span style="top:236.82px;font-size:8.5px;color:#1f1f1f;left:435.40px;letter-spacing:0.319px;">info?t=1753398983275</span>
<span style="top:236.82px;font-size:8.5px;color:#1f1f1f;left:666.70px;letter-spacing:0.037px;">200</span>
<span style="top:236.82px;font-size:8.5px;color:#1f1f1f;left:740.20px;letter-spacing:-0.071px;">xhr</span>
<span style="top:236.82px;font-size:8.5px;color:#1f1f1f;left:813.80px;letter-spacing:0.222px;text-decoration:underline;text-decoration-color:#606060;text-decoration-thickness:0.8px;">chunk-vendors.js:11858</span>
<span style="top:236.82px;font-size:8.5px;color:#1f1f1f;right:76.60px;">0.5 kB</span>
<span style="top:236.82px;font-size:8.5px;color:#1f1f1f;right:3.00px;">2 ms</span>
<div style="left:419px;top:251.18px;width:661px;height:14.72px;background:#f5f8fe;"></div>
<svg style="left:422.6px;top:254.54000000000002px;" width="10" height="8" viewBox="0 0 10 8"><path d="M3 0.8 C1.8 0.8 1.9 1.8 1.9 2.6 C1.9 3.4 1.4 3.9 0.6 4 C1.4 4.1 1.9 4.6 1.9 5.4 C1.9 6.2 1.8 7.2 3 7.2 M7 0.8 C8.2 0.8 8.1 1.8 8.1 2.6 C8.1 3.4 8.6 3.9 9.4 4 C8.6 4.1 8.1 4.6 8.1 5.4 C8.1 6.2 8.2 7.2 7 7.2" fill="none" stroke="#e9642c" stroke-width="1.1"/><circle cx="5" cy="2.5" r="0.7" fill="#e9642c"/><rect x="4.45" y="3.7" width="1.1" height="2.4" fill="#e9642c"/></svg>
<span style="top:251.54px;font-size:8.5px;color:#1f1f1f;left:435.40px;letter-spacing:0.334px;">getVierificationCode</span>
<span style="top:251.54px;font-size:8.5px;color:#1f1f1f;left:666.70px;letter-spacing:0.037px;">200</span>
<span style="top:251.54px;font-size:8.5px;color:#1f1f1f;left:740.20px;letter-spacing:-0.071px;">xhr</span>
<span style="top:251.54px;font-size:8.5px;color:#1f1f1f;left:813.80px;letter-spacing:0.192px;text-decoration:underline;text-decoration-color:#606060;text-decoration-thickness:0.8px;">chunk-vendors.js:23954</span>
<span style="top:251.54px;font-size:8.5px;color:#1f1f1f;right:76.60px;">1.1 kB</span>
<span style="top:251.54px;font-size:8.5px;color:#1f1f1f;right:3.00px;">5 ms</span>
<svg style="left:422.6px;top:269.26px;" width="10" height="8" viewBox="0 0 10 8"><path d="M3 0.8 C1.8 0.8 1.9 1.8 1.9 2.6 C1.9 3.4 1.4 3.9 0.6 4 C1.4 4.1 1.9 4.6 1.9 5.4 C1.9 6.2 1.8 7.2 3 7.2 M7 0.8 C8.2 0.8 8.1 1.8 8.1 2.6 C8.1 3.4 8.6 3.9 9.4 4 C8.6 4.1 8.1 4.6 8.1 5.4 C8.1 6.2 8.2 7.2 7 7.2" fill="none" stroke="#e9642c" stroke-width="1.1"/><circle cx="5" cy="2.5" r="0.7" fill="#e9642c"/><rect x="4.45" y="3.7" width="1.1" height="2.4" fill="#e9642c"/></svg>
<span style="top:266.26px;font-size:8.5px;color:#1f1f1f;left:435.40px;letter-spacing:0.426px;">login</span>
<span style="top:266.26px;font-size:8.5px;color:#1f1f1f;left:666.70px;letter-spacing:0.037px;">200</span>
<span style="top:266.26px;font-size:8.5px;color:#1f1f1f;left:740.20px;letter-spacing:-0.071px;">xhr</span>
<span style="top:266.26px;font-size:8.5px;color:#1f1f1f;left:813.80px;letter-spacing:0.192px;text-decoration:underline;text-decoration-color:#606060;text-decoration-thickness:0.8px;">chunk-vendors.js:23954</span>
<span style="top:266.26px;font-size:8.5px;color:#1f1f1f;right:76.60px;">0.6 kB</span>
<span style="top:266.26px;font-size:8.5px;color:#1f1f1f;right:3.00px;">11 ms</span>
<div style="left:419px;top:280.62px;width:661px;height:14.72px;background:#f5f8fe;"></div>
<svg style="left:422.6px;top:283.98px;" width="10" height="8" viewBox="0 0 10 8"><path d="M3 0.8 C1.8 0.8 1.9 1.8 1.9 2.6 C1.9 3.4 1.4 3.9 0.6 4 C1.4 4.1 1.9 4.6 1.9 5.4 C1.9 6.2 1.8 7.2 3 7.2 M7 0.8 C8.2 0.8 8.1 1.8 8.1 2.6 C8.1 3.4 8.6 3.9 9.4 4 C8.6 4.1 8.1 4.6 8.1 5.4 C8.1 6.2 8.2 7.2 7 7.2" fill="none" stroke="#e9642c" stroke-width="1.1"/><circle cx="5" cy="2.5" r="0.7" fill="#e9642c"/><rect x="4.45" y="3.7" width="1.1" height="2.4" fill="#e9642c"/></svg>
<span style="top:280.98px;font-size:8.5px;color:#1f1f1f;left:435.40px;letter-spacing:0.259px;">getTreeMenu</span>
<span style="top:280.98px;font-size:8.5px;color:#1f1f1f;left:666.70px;letter-spacing:0.037px;">200</span>
<span style="top:280.98px;font-size:8.5px;color:#1f1f1f;left:740.20px;letter-spacing:-0.071px;">xhr</span>
<span style="top:280.98px;font-size:8.5px;color:#1f1f1f;left:813.80px;letter-spacing:0.192px;text-decoration:underline;text-decoration-color:#606060;text-decoration-thickness:0.8px;">chunk-vendors.js:23954</span>
<span style="top:280.98px;font-size:8.5px;color:#1f1f1f;right:76.60px;">1.7 kB</span>
<span style="top:280.98px;font-size:8.5px;color:#1f1f1f;right:3.00px;">10 ms</span>
<svg style="left:422.6px;top:298.7px;" width="10" height="8" viewBox="0 0 10 8"><path d="M3 0.8 C1.8 0.8 1.9 1.8 1.9 2.6 C1.9 3.4 1.4 3.9 0.6 4 C1.4 4.1 1.9 4.6 1.9 5.4 C1.9 6.2 1.8 7.2 3 7.2 M7 0.8 C8.2 0.8 8.1 1.8 8.1 2.6 C8.1 3.4 8.6 3.9 9.4 4 C8.6 4.1 8.1 4.6 8.1 5.4 C8.1 6.2 8.2 7.2 7 7.2" fill="none" stroke="#e9642c" stroke-width="1.1"/><circle cx="5" cy="2.5" r="0.7" fill="#e9642c"/><rect x="4.45" y="3.7" width="1.1" height="2.4" fill="#e9642c"/></svg>
<span style="top:295.70px;font-size:8.5px;color:#1f1f1f;left:435.40px;letter-spacing:0.180px;">getPageData</span>
<span style="top:295.70px;font-size:8.5px;color:#1f1f1f;left:666.70px;letter-spacing:0.037px;">200</span>
<span style="top:295.70px;font-size:8.5px;color:#1f1f1f;left:740.20px;letter-spacing:-0.071px;">xhr</span>
<span style="top:295.70px;font-size:8.5px;color:#1f1f1f;left:813.80px;letter-spacing:0.192px;text-decoration:underline;text-decoration-color:#606060;text-decoration-thickness:0.8px;">chunk-vendors.js:23954</span>
<span style="top:295.70px;font-size:8.5px;color:#1f1f1f;right:76.60px;">0.8 kB</span>
<span style="top:295.70px;font-size:8.5px;color:#1f1f1f;right:3.00px;">5 ms</span>
<div style="left:419px;top:310.06px;width:661px;height:14.72px;background:#f5f8fe;"></div>
<svg style="left:422.6px;top:313.12px;" width="9" height="8.5" viewBox="0 0 9 8.5"><path d="M1.2 0.9 H5.4 L7.8 3.3 V7.6 H1.2 Z M5.2 1 V3.5 H7.7" fill="none" stroke="#4d5156" stroke-width="1" stroke-linejoin="round"/></svg>
<span style="top:310.42px;font-size:8.5px;color:#1f1f1f;left:435.40px;letter-spacing:0.287px;">GetVueDictionary</span>
<span style="top:310.42px;font-size:8.5px;color:#1f1f1f;left:666.70px;letter-spacing:0.037px;">200</span>
<span style="top:310.42px;font-size:8.5px;color:#1f1f1f;left:740.20px;letter-spacing:-0.071px;">xhr</span>
<span style="top:310.42px;font-size:8.5px;color:#1f1f1f;left:813.80px;letter-spacing:0.192px;text-decoration:underline;text-decoration-color:#606060;text-decoration-thickness:0.8px;">chunk-vendors.js:23954</span>
<span style="top:310.42px;font-size:8.5px;color:#1f1f1f;right:76.60px;">0.8 kB</span>
<span style="top:310.42px;font-size:8.5px;color:#1f1f1f;right:3.00px;">3 ms</span>
<svg style="left:422.6px;top:328.14px;" width="10" height="8" viewBox="0 0 10 8"><path d="M3 0.8 C1.8 0.8 1.9 1.8 1.9 2.6 C1.9 3.4 1.4 3.9 0.6 4 C1.4 4.1 1.9 4.6 1.9 5.4 C1.9 6.2 1.8 7.2 3 7.2 M7 0.8 C8.2 0.8 8.1 1.8 8.1 2.6 C8.1 3.4 8.6 3.9 9.4 4 C8.6 4.1 8.1 4.6 8.1 5.4 C8.1 6.2 8.2 7.2 7 7.2" fill="none" stroke="#e9642c" stroke-width="1.1"/><circle cx="5" cy="2.5" r="0.7" fill="#e9642c"/><rect x="4.45" y="3.7" width="1.1" height="2.4" fill="#e9642c"/></svg>
<span style="top:325.14px;font-size:8.5px;color:#1f1f1f;left:435.40px;letter-spacing:0.180px;">getPageData</span>
<span style="top:325.14px;font-size:8.5px;color:#1f1f1f;left:666.70px;letter-spacing:0.037px;">200</span>
<span style="top:325.14px;font-size:8.5px;color:#1f1f1f;left:740.20px;letter-spacing:-0.071px;">xhr</span>
<span style="top:325.14px;font-size:8.5px;color:#1f1f1f;left:813.80px;letter-spacing:0.192px;text-decoration:underline;text-decoration-color:#606060;text-decoration-thickness:0.8px;">chunk-vendors.js:23954</span>
<span style="top:325.14px;font-size:8.5px;color:#1f1f1f;right:76.60px;">0.8 kB</span>
<span style="top:325.14px;font-size:8.5px;color:#1f1f1f;right:3.00px;">9 ms</span>
<div style="left:419px;top:339.5px;width:661px;height:14.72px;background:#f5f8fe;"></div>
<svg style="left:422.6px;top:342.56px;" width="9" height="8.5" viewBox="0 0 9 8.5"><path d="M1.2 0.9 H5.4 L7.8 3.3 V7.6 H1.2 Z M5.2 1 V3.5 H7.7" fill="none" stroke="#4d5156" stroke-width="1" stroke-linejoin="round"/></svg>
<span style="top:339.86px;font-size:8.5px;color:#1f1f1f;left:435.40px;letter-spacing:0.287px;">GetVueDictionary</span>
<span style="top:339.86px;font-size:8.5px;color:#1f1f1f;left:666.70px;letter-spacing:0.037px;">200</span>
<span style="top:339.86px;font-size:8.5px;color:#1f1f1f;left:740.20px;letter-spacing:-0.071px;">xhr</span>
<span style="top:339.86px;font-size:8.5px;color:#1f1f1f;left:813.80px;letter-spacing:0.192px;text-decoration:underline;text-decoration-color:#606060;text-decoration-thickness:0.8px;">chunk-vendors.js:23954</span>
<span style="top:339.86px;font-size:8.5px;color:#1f1f1f;right:76.60px;">0.8 kB</span>
<span style="top:339.86px;font-size:8.5px;color:#1f1f1f;right:3.00px;">2 ms</span>
<svg style="left:422.6px;top:357.28000000000003px;" width="9" height="8.5" viewBox="0 0 9 8.5"><path d="M1.2 0.9 H5.4 L7.8 3.3 V7.6 H1.2 Z M5.2 1 V3.5 H7.7" fill="none" stroke="#4d5156" stroke-width="1" stroke-linejoin="round"/></svg>
<span style="top:354.58px;font-size:8.5px;color:#1f1f1f;left:435.40px;letter-spacing:0.287px;">GetVueDictionary</span>
<span style="top:354.58px;font-size:8.5px;color:#1f1f1f;left:666.70px;letter-spacing:0.037px;">200</span>
<span style="top:354.58px;font-size:8.5px;color:#1f1f1f;left:740.20px;letter-spacing:-0.071px;">xhr</span>
<span style="top:354.58px;font-size:8.5px;color:#1f1f1f;left:813.80px;letter-spacing:0.192px;text-decoration:underline;text-decoration-color:#606060;text-decoration-thickness:0.8px;">chunk-vendors.js:23954</span>
<span style="top:354.58px;font-size:8.5px;color:#1f1f1f;right:76.60px;">2.7 kB</span>
<span style="top:354.58px;font-size:8.5px;color:#1f1f1f;right:3.00px;">8 ms</span>
<div style="left:419px;top:368.94px;width:661px;height:14.72px;background:#f5f8fe;"></div>
<svg style="left:422.6px;top:372.3px;" width="10" height="8" viewBox="0 0 10 8"><path d="M3 0.8 C1.8 0.8 1.9 1.8 1.9 2.6 C1.9 3.4 1.4 3.9 0.6 4 C1.4 4.1 1.9 4.6 1.9 5.4 C1.9 6.2 1.8 7.2 3 7.2 M7 0.8 C8.2 0.8 8.1 1.8 8.1 2.6 C8.1 3.4 8.6 3.9 9.4 4 C8.6 4.1 8.1 4.6 8.1 5.4 C8.1 6.2 8.2 7.2 7 7.2" fill="none" stroke="#e9642c" stroke-width="1.1"/><circle cx="5" cy="2.5" r="0.7" fill="#e9642c"/><rect x="4.45" y="3.7" width="1.1" height="2.4" fill="#e9642c"/></svg>
<span style="top:369.30px;font-size:8.5px;color:#1f1f1f;left:435.40px;letter-spacing:0.180px;">getPageData</span>
<span style="top:369.30px;font-size:8.5px;color:#1f1f1f;left:666.70px;letter-spacing:0.037px;">200</span>
<span style="top:369.30px;font-size:8.5px;color:#1f1f1f;left:740.20px;letter-spacing:-0.071px;">xhr</span>
<span style="top:369.30px;font-size:8.5px;color:#1f1f1f;left:813.80px;letter-spacing:0.192px;text-decoration:underline;text-decoration-color:#606060;text-decoration-thickness:0.8px;">chunk-vendors.js:23954</span>
<span style="top:369.30px;font-size:8.5px;color:#1f1f1f;right:76.60px;">1.4 kB</span>
<span style="top:369.30px;font-size:8.5px;color:#1f1f1f;right:3.00px;">7 ms</span>
<svg style="left:422.6px;top:386.71999999999997px;" width="9" height="8.5" viewBox="0 0 9 8.5"><path d="M1.2 0.9 H5.4 L7.8 3.3 V7.6 H1.2 Z M5.2 1 V3.5 H7.7" fill="none" stroke="#4d5156" stroke-width="1" stroke-linejoin="round"/></svg>
<span style="top:384.02px;font-size:8.5px;color:#1f1f1f;left:435.40px;letter-spacing:0.287px;">GetVueDictionary</span>
<span style="top:384.02px;font-size:8.5px;color:#1f1f1f;left:666.70px;letter-spacing:0.037px;">200</span>
<span style="top:384.02px;font-size:8.5px;color:#1f1f1f;left:740.20px;letter-spacing:-0.071px;">xhr</span>
<span style="top:384.02px;font-size:8.5px;color:#1f1f1f;left:813.80px;letter-spacing:0.192px;text-decoration:underline;text-decoration-color:#606060;text-decoration-thickness:0.8px;">chunk-vendors.js:23954</span>
<span style="top:384.02px;font-size:8.5px;color:#1f1f1f;right:76.60px;">2.7 kB</span>
<span style="top:384.02px;font-size:8.5px;color:#1f1f1f;right:3.00px;">7 ms</span>
<div style="left:663px;top:203px;width:1px;height:358px;background:#d9e5fc;"></div>
<div style="left:737px;top:203px;width:1px;height:358px;background:#d9e5fc;"></div>
<div style="left:810px;top:203px;width:1px;height:358px;background:#d9e5fc;"></div>
<div style="left:933px;top:203px;width:1px;height:358px;background:#d9e5fc;"></div>
<div style="left:1007px;top:203px;width:1px;height:358px;background:#d9e5fc;"></div>
<div style="left:419px;top:561px;width:661px;height:1px;background:#d3e3fd;"></div>
<span style="top:563.00px;font-size:8.5px;color:#1f1f1f;left:426.30px;letter-spacing:0.221px;">12 / 75 requests</span>
<div style="left:498.2px;top:565.5px;width:1px;height:10px;background:#d3e3fd;"></div>
<span style="top:563.00px;font-size:8.5px;color:#1f1f1f;left:504.60px;letter-spacing:0.193px;">14.1 kB / 22.6 kB transferred</span>
<div style="left:625.4px;top:565.5px;width:1px;height:10px;background:#d3e3fd;"></div>
<span style="top:563.00px;font-size:8.5px;color:#1f1f1f;left:632.10px;letter-spacing:0.157px;">11.2 kB / 8,375 kB resources</span>
<div style="left:751.5px;top:565.5px;width:1px;height:10px;background:#d3e3fd;"></div>
<span style="top:563.00px;font-size:8.5px;color:#1f1f1f;left:758.50px;letter-spacing:0.115px;">Finish: 2.3 min</span>
<div style="left:822.5px;top:565.5px;width:1px;height:10px;background:#d3e3fd;"></div>
<span style="top:563.00px;font-size:8.5px;color:#0b57d0;left:829.00px;letter-spacing:0.268px;">DOMContentLoaded: 344 ms</span>
<div style="left:953px;top:565.5px;width:1px;height:10px;background:#d3e3fd;"></div>
<span style="top:563.00px;font-size:8.5px;color:#c5221f;left:960.00px;letter-spacing:0.124px;">Load: 364 ms</span>
<div style="left:0px;top:579px;width:1080px;height:5px;background:#1c2c3a;background:linear-gradient(90deg,#1e343c 0%,#1d2f3c 45%,#1b2740 100%);"></div>
<div style="left:280px;top:579px;width:34.5px;height:5px;background:#46595f;"></div>
<div style="left:0px;top:578px;width:1080px;height:1px;background:#8e979e;"></div>
<div style="left:280px;top:578px;width:34.5px;height:1px;background:#a3adb1;"></div>
</div></body></html>
